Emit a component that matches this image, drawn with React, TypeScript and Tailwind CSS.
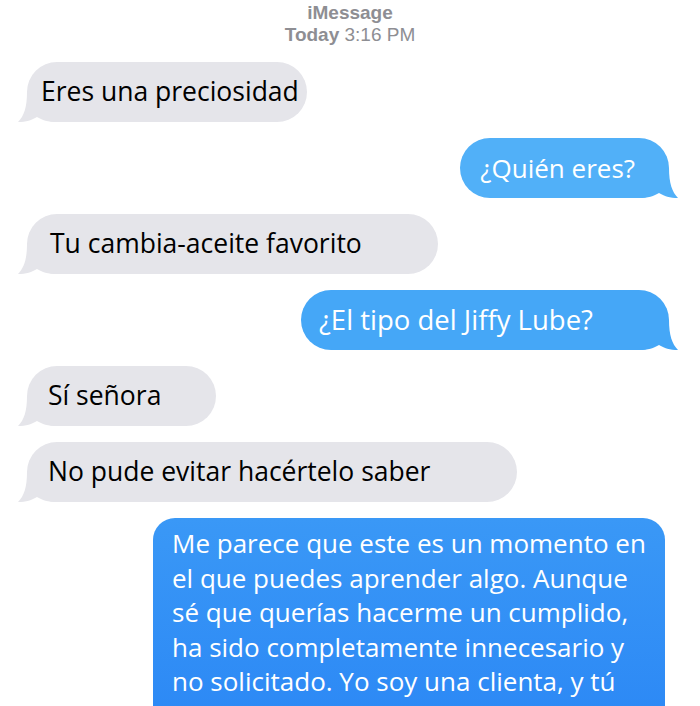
import type { ReactNode } from 'react';

function Tail({ color, side }: { color: string; side: 'left' | 'right' }) {
  return (
    <svg
      width="40"
      height="30"
      viewBox="0 0 40 30"
      className={`absolute bottom-0 ${side === 'left' ? '-left-[9px]' : '-right-[9px] -scale-x-100'}`}
    >
      <path d="M9 0 C9 15 6 24 0 30 C8 30 14 28 19 25 C24 28 30 30 39 30 L39 0 Z" fill={color} />
    </svg>
  );
}

function Received({ children, className }: { children: ReactNode; className: string }) {
  return (
    <div className="flex justify-start pl-[27px]">
      <div className={`relative flex h-[60px] items-center rounded-[30px] bg-[#e5e5ea] text-[26.5px] text-black ${className}`}>
        <Tail color="#e5e5ea" side="left" />
        <span className="relative">{children}</span>
      </div>
    </div>
  );
}

function Sent({ children, className, color }: { children: ReactNode; className: string; color: string }) {
  return (
    <div className="flex justify-end pr-[31px]">
      <div
        className={`relative flex h-[60px] items-center rounded-[30px] text-white ${className}`}
        style={{ background: color }}
      >
        <Tail color={color} side="right" />
        <span className="relative">{children}</span>
      </div>
    </div>
  );
}

export default function App() {
  return (
    <div className="h-[706px] w-[700px] overflow-hidden bg-white font-['Open_Sans',sans-serif]">
      {/* header */}
      <div className="flex flex-col items-center pt-[2px] font-['Liberation_Sans',Arial,sans-serif] text-[#8e8e93]">
        <p className="text-[19px] font-bold leading-[22px]">iMessage</p>
        <p className="text-[19px] leading-[22px]">
          <span className="font-bold">Today</span> 3:16 PM
        </p>
      </div>

      <div className="mt-[16px] flex flex-col gap-4">
        <Received className="pl-[14px] pr-[8px]">Eres una preciosidad</Received>
        <Sent className="pl-[20px] pr-[34px] text-[26px]" color="#51b0f8">¿Quién eres?</Sent>
        <Received className="w-[411px] pl-[23px]">Tu cambia-aceite favorito</Received>
        <Sent className="w-[368px] pl-[18px] text-[27.5px]" color="#45a7f7">¿El tipo del Jiffy Lube?</Sent>
        <Received className="w-[189px] pl-[21px]">Sí señora</Received>
        <Received className="w-[490px] pl-[21px]">No pude evitar hacértelo saber</Received>

        <div className="flex justify-end pr-[35px]">
          <div className="w-[512px] rounded-t-[22px] bg-gradient-to-b from-[#3a98f6] to-[#2a86f5] pt-[8px] pr-[10px] pb-[20px] pl-[19px] text-[26px] leading-[34.5px] text-white">
            Me parece que este es un momento en el que puedes aprender algo. Aunque sé que querías hacerme un cumplido,
            ha sido completamente innecesario y no solicitado. Yo soy una clienta, y tú eres un empleado.
          </div>
        </div>
      </div>
    </div>
  );
}
